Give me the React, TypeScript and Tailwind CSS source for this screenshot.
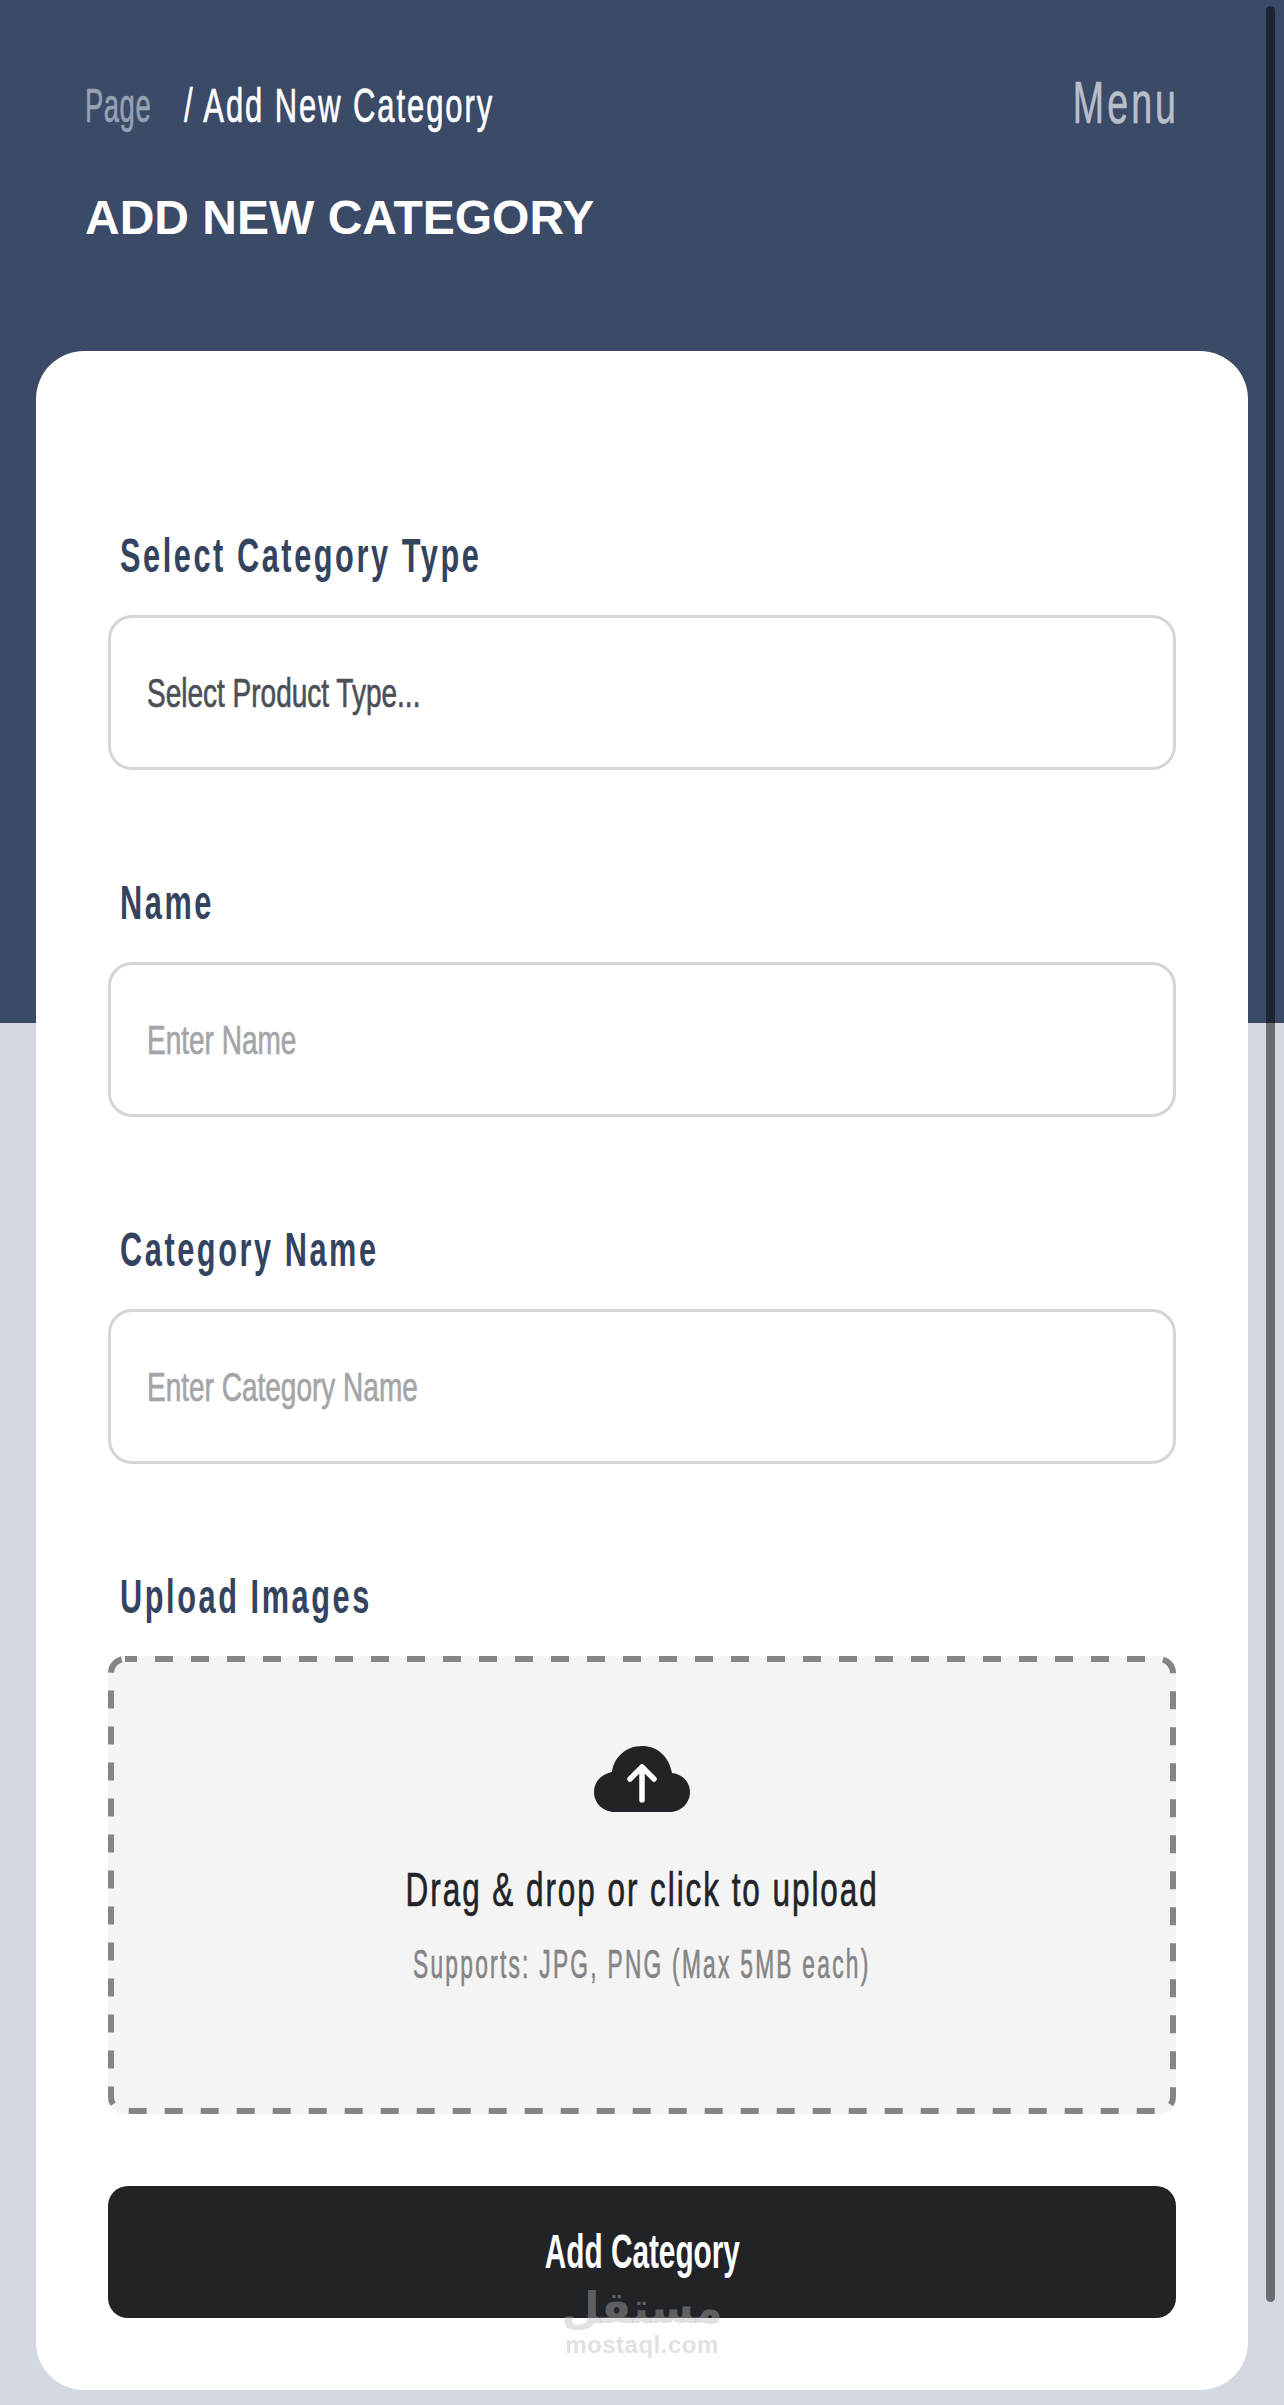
// no condensed face is installed, so the narrow text is Liberation Sans squeezed on x
const squeeze = 'inline-block whitespace-nowrap'
const thicker = '[-webkit-text-stroke:0.7px_currentColor]'
const labelText = `${squeeze} origin-left scale-x-[.64] text-[48px] leading-[56px] font-bold tracking-[4px] text-[#34445f]`

function Field({ label, placeholder, dark }: { label: string; placeholder: string; dark?: boolean }) {
  return (
    <div>
      <label className="block pl-3">
        <span className={labelText}>{label}</span>
      </label>
      <div className={`mt-[31px] flex h-[155px] items-center rounded-[24px] border-[3px] border-[#d4d5d7] bg-white pl-[36px] text-[40px] ${dark ? 'text-[#4b5058]' : 'text-[#a3a5a8]'}`}>
        <span className={`${squeeze} ${thicker} origin-left scale-x-[.70]`}>{placeholder}</span>
      </div>
    </div>
  )
}

function CloudUpload() {
  return (
    <svg width="96" height="66" viewBox="0 0 96 66">
      <path
        d="M21 66C9 66 0 57 0 46c0-10 7-18 18-20C20 11 32 0 48 0c15 0 27 10 30 27 10 1 18 9 18 19 0 11-9 20-20 20z"
        fill="#212327"
      />
      <path d="M48 54V21M36 33l12-12 12 12" fill="none" stroke="#fff" strokeWidth="5.5" strokeLinecap="round" strokeLinejoin="round" />
    </svg>
  )
}

export default function App() {
  return (
    <div className="relative h-[2405px] overflow-hidden bg-[#d4d8e0] font-['Liberation_Sans',sans-serif]">
      <div className="h-[1023px] bg-[#3a4a67] px-[85px] pt-[76px]">
        <div className="flex items-start justify-between pr-[20px]">
          <div className="flex text-[48px] leading-[60px]">
            <div className="w-[99px]">
              <span className={`${squeeze} ${thicker} origin-left scale-x-[.57] tracking-[1px] text-[#97a1b4]`}>Page</span>
            </div>
            <span className={`${squeeze} ${thicker} origin-left scale-x-[.645] tracking-[3px] text-white`}>/ Add New Category</span>
          </div>
          <span className={`${squeeze} ${thicker} origin-right scale-x-[.625] -translate-y-[3px] text-[60px] leading-[60px] tracking-[5px] text-[#b9bfca]`}>Menu</span>
        </div>
        <h1 className="mt-[52px] text-[48px] leading-[60px] font-bold text-white">ADD NEW CATEGORY</h1>
      </div>

      <div className="relative mx-[36px] -mt-[672px] h-[2039px] rounded-[48px] bg-white px-[72px] pt-[177px]">
        <div className="flex flex-col gap-[105px]">
          <Field label="Select Category Type" placeholder="Select Product Type..." dark />
          <Field label="Name" placeholder="Enter Name" />
          <Field label="Category Name" placeholder="Enter Category Name" />
          <div>
            <label className="block pl-3">
              <span className={labelText}>Upload Images</span>
            </label>
            <div className="relative mt-[31px] flex h-[458px] flex-col items-center rounded-[16px] bg-[#f4f4f5] pt-[90px]">
              <svg className="absolute inset-0" width="1068" height="458" fill="none">
                <rect x="3" y="3" width="1062" height="452" rx="14" stroke="#858585" strokeWidth="6" strokeDasharray="18 18" strokeDashoffset="6" />
              </svg>
              <CloudUpload />
              <div className="mt-[50px] text-[48px] leading-[56px] text-[#212327]">
                <span className={`${squeeze} ${thicker} scale-x-[.655] tracking-[3px]`}>Drag &amp; drop or click to upload</span>
              </div>
              <div className="mt-[22px] text-[40px] leading-[48px] text-[#858585]">
                <span className={`${squeeze} ${thicker} scale-x-[.568] tracking-[4px]`}>Supports: JPG, PNG (Max 5MB each)</span>
              </div>
            </div>
          </div>
        </div>
        <button className="mt-[72px] flex h-[132px] w-full items-center justify-center rounded-[20px] bg-[#212327] text-[48px] font-bold text-white">
          <span className={`${squeeze} scale-x-[.62]`}>Add Category</span>
        </button>
      </div>

      <div className="absolute top-[2284px] left-[565px] flex w-[154px] flex-col items-center text-[rgba(183,183,183,0.43)]">
        <span className="font-['DejaVu_Sans',sans-serif] text-[44px] leading-[48px] font-bold">مستقل</span>
        <span className="text-[24px] leading-[26px] font-bold tracking-[0.5px]">mostaql.com</span>
      </div>

      <div className="absolute top-[6px] left-[1266px] h-[2296px] w-[9px] rounded-full bg-[rgba(0,0,0,0.5)]" />
    </div>
  )
}
